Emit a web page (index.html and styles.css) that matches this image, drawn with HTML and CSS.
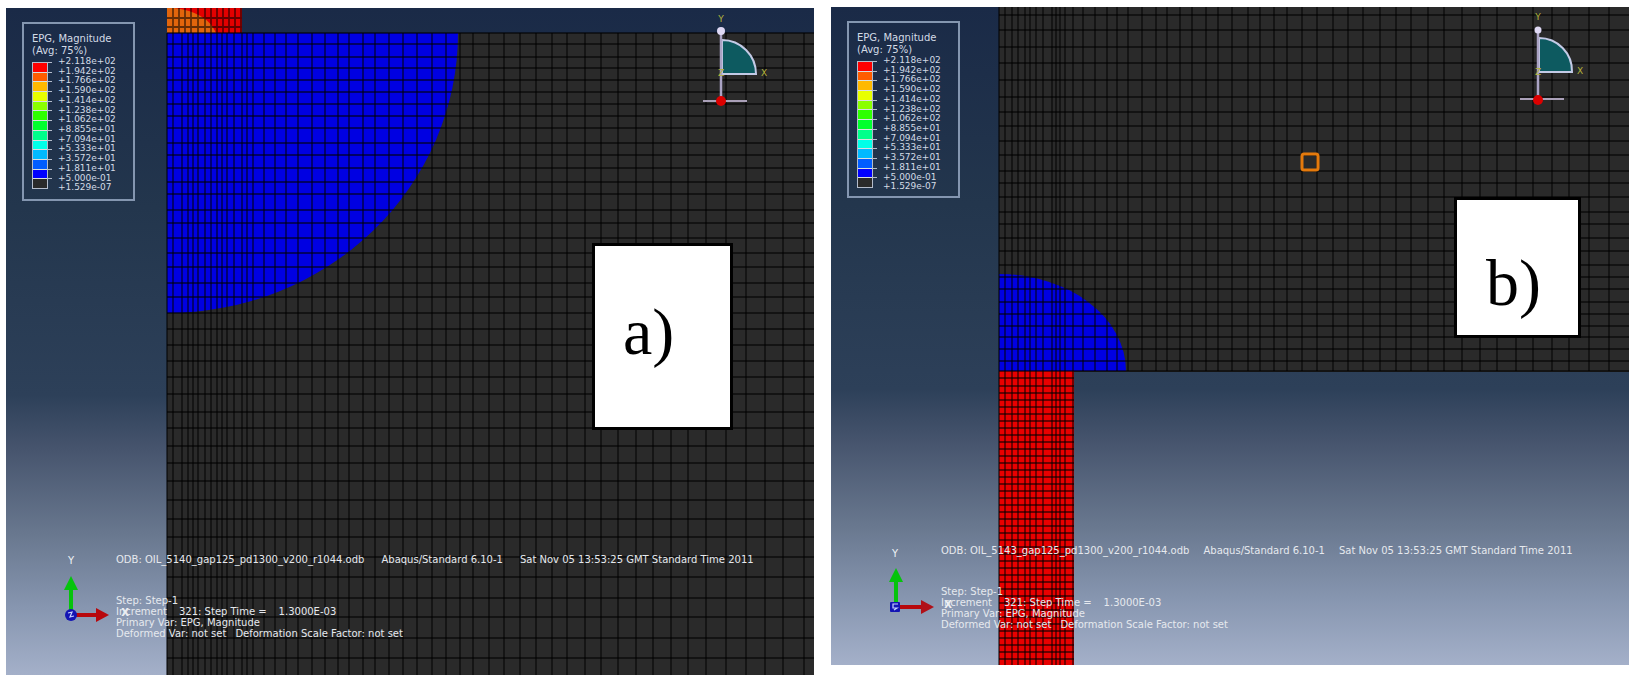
FILE: index.html
```html
<!DOCTYPE html>
<html lang="en">
<head>
<meta charset="utf-8">
<title>EPG magnitude contours</title>
<link rel="stylesheet" href="styles.css">
</head>
<body>
<main class="figure">
  <section class="panel panel-a">
    <svg class="scene" viewBox="6 8 808 667" role="img" aria-label="Contour plot a">
      <defs>
        <linearGradient id="sky" x1="0" y1="0" x2="0" y2="1">
          <stop offset="0" stop-color="#1a2a47"/>
          <stop offset=".3" stop-color="#23364d"/>
          <stop offset=".58" stop-color="#2d4059"/>
          <stop offset=".66" stop-color="#46546d"/>
          <stop offset=".79" stop-color="#69788f"/>
          <stop offset=".9" stop-color="#8796b0"/>
          <stop offset="1" stop-color="#a4b0c9"/>
        </linearGradient>
      </defs>
      <rect x="6" y="8" width="808" height="667" fill="url(#sky)"/>
      <rect x="167" y="33" width="647" height="642" fill="#2a2a2a"/>
      <path d="M167 33H458A291 280 0 0 1 167 313Z" fill="#0000e2"/>
      <rect x="167" y="8" width="75" height="25" fill="#e30000"/>
      <path d="M167 8H174Q207 12 216 33H167Z" fill="#e2650c"/>
      <path class="mesh" d="M173 8V33M179 8V33M185 8V33M191 8V33M198 8V33M205 8V33M211 8V33M217 8V33M223 8V33M229 8V33M235 8V33M241 8V33M167 18H242M167 27H242"/>
      <path class="mesh" d="M167 33V675M173 33V675M182 33V675M188 33V675M193 33V675M198 33V675M205 33V675M211 33V675M217 33V675M222 33V675M227 33V675M234 33V675M242 33V675M247 33V675M253 33V675M264 33V675M275 33V675M286 33V675M298 33V675M312 33V675M325 33V675M338 33V675M349 33V675M363 33V675M375 33V675M389 33V675M403 33V675M417 33V675M432 33V675M446 33V675M460 33V675M473 33V675M489 33V675M504 33V675M520 33V675M536 33V675M552 33V675M567 33V675M585 33V675M601 33V675M618 33V675M636 33V675M653 33V675M671 33V675M688 33V675M706 33V675M726 33V675M746 33V675M765 33V675M783 33V675M804 33V675"/>
      <path class="mesh" d="M167 33H814M167 44H814M167 57H814M167 68H814M167 80H814M167 92H814M167 104H814M167 116H814M167 128H814M167 143H814M167 155H814M167 168H814M167 182H814M167 194H814M167 210H814M167 223H814M167 238H814M167 253H814M167 267H814M167 283H814M167 297H814M167 313H814M167 329H814M167 345H814M167 361H814M167 377H814M167 394H814M167 412H814M167 428H814M167 446H814M167 463H814M167 481H814M167 500H814M167 519H814M167 537H814M167 557H814M167 577H814M167 598H814M167 617H814M167 638H814M167 658H814"/>
      <g class="compass">
        <path d="M722 40A34 34 0 0 1 756 74H722Z" class="sector"/>
        <path d="M721 31V98" class="stem"/>
        <path d="M703 101H747" class="base"/>
        <circle cx="721" cy="31" r="4" fill="#ded8f4"/>
        <circle cx="721" cy="101" r="5" fill="#dc0000"/>
        <text x="721" y="22">Y</text><text x="764" y="76">X</text><text x="721" y="76">Z</text>
      </g>
      <g class="triad">
        <path d="M71 610V588" class="up"/><path d="M64 590L71 576L78 590Z" fill="#05c40c"/>
        <path d="M76 615H98" class="right"/><path d="M96 608L109 615L96 622Z" fill="#b8080c"/>
        <circle cx="71" cy="615" r="6" fill="#1414b4"/>
        <path d="M68 613L72 612L70 617L74 616" class="zmark"/>
        <text x="71" y="564">Y</text><text x="125" y="616" class="bold">X</text>
      </g>
    </svg>
    <div class="legend">
      <p class="legend-title">EPG, Magnitude<br>(Avg: 75%)</p>
      <div class="scale">
        <div class="bar"><i class="c1"></i><i class="c2"></i><i class="c3"></i><i class="c4"></i><i class="c5"></i><i class="c6"></i><i class="c7"></i><i class="c8"></i><i class="c9"></i><i class="c10"></i><i class="c11"></i><i class="c12"></i><i class="c13"></i></div>
        <ul class="values"><li>+2.118e+02</li><li>+1.942e+02</li><li>+1.766e+02</li><li>+1.590e+02</li><li>+1.414e+02</li><li>+1.238e+02</li><li>+1.062e+02</li><li>+8.855e+01</li><li>+7.094e+01</li><li>+5.333e+01</li><li>+3.572e+01</li><li>+1.811e+01</li><li>+5.000e-01</li><li>+1.529e-07</li></ul>
      </div>
    </div>
    <div class="tag">a)</div>
    <div class="status">
      <p class="source"><span>ODB: OIL_5140_gap125_pd1300_v200_r1044.odb</span><span>Abaqus/Standard 6.10-1</span><span>Sat Nov 05 13:53:25 GMT Standard Time 2011</span></p>
      <p>Step: Step-1</p>
      <p class="increment"><span>Increment</span><span>321: Step Time =</span><span>1.3000E-03</span></p>
      <p>Primary Var: EPG, Magnitude</p>
      <p class="deformed"><span>Deformed Var: not set</span><span>Deformation Scale Factor: not set</span></p>
    </div>
  </section>

  <section class="panel panel-b">
    <svg class="scene" viewBox="831 7 798 658" role="img" aria-label="Contour plot b">
      <rect x="831" y="7" width="798" height="658" fill="url(#sky)"/>
      <rect x="999" y="7" width="630" height="365" fill="#2a2a2a"/>
      <path d="M999 371V274A127 97 0 0 1 1126 371Z" fill="#0000e2"/>
      <rect x="999" y="371" width="75" height="294" fill="#e80000"/>
      <path class="mesh" d="M999 7V665M1005 7V665M1012 7V665M1018 7V665M1025 7V665M1030 7V665M1036 7V665M1043 7V665M1052 7V665M1056 7V665M1060 7V665M1065 7V665M1073 7V665M1083 7V371M1095 7V371M1107 7V371M1117 7V371M1128 7V371M1142 7V371M1156 7V371M1167 7V371M1180 7V371M1192 7V371M1206 7V371M1218 7V371M1232 7V371M1248 7V371M1260 7V371M1274 7V371M1287 7V371M1302 7V371M1317 7V371M1333 7V371M1348 7V371M1363 7V371M1380 7V371M1396 7V371M1411 7V371M1428 7V371M1444 7V371M1462 7V371M1480 7V371M1497 7V371M1516 7V371M1533 7V371M1552 7V371M1569 7V371M1589 7V371M1609 7V371"/>
      <path class="mesh" d="M999 15H1629M999 30H1629M999 47H1629M999 63H1629M999 80H1629M999 97H1629M999 112H1629M999 126H1629M999 141H1629M999 155H1629M999 171H1629M999 183H1629M999 197H1629M999 212H1629M999 224H1629M999 238H1629M999 251H1629M999 265H1629M999 277H1629M999 289H1629M999 302H1629M999 314H1629M999 326H1629M999 337H1629M999 349H1629M999 361H1629M999 371H1629"/>
      <path class="mesh" d="M999 378H1074M999 386H1074M999 393H1074M999 400H1074M999 407H1074M999 414H1074M999 421H1074M999 428H1074M999 435H1074M999 442H1074M999 449H1074M999 456H1074M999 463H1074M999 470H1074M999 477H1074M999 484H1074M999 491H1074M999 498H1074M999 505H1074M999 512H1074M999 519H1074M999 526H1074M999 533H1074M999 540H1074M999 547H1074M999 554H1074M999 561H1074M999 568H1074M999 575H1074M999 582H1074M999 589H1074M999 596H1074M999 603H1074M999 610H1074M999 617H1074M999 624H1074M999 631H1074M999 638H1074M999 645H1074M999 652H1074M999 659H1074"/>
      <rect x="1302" y="154" width="16" height="16" rx="2" class="marker"/>
      <g class="compass">
        <path d="M1539 38A33 33 0 0 1 1572 72H1539Z" class="sector"/>
        <path d="M1538 30V96" class="stem"/>
        <path d="M1520 99H1564" class="base"/>
        <circle cx="1538" cy="30" r="3.5" fill="#ded8f4"/>
        <circle cx="1538" cy="100" r="5" fill="#dc0000"/>
        <text x="1538" y="20">Y</text><text x="1580" y="74">X</text><text x="1538" y="75">Z</text>
      </g>
      <g class="triad">
        <path d="M896 602V580" class="up"/><path d="M889 582L896 568L903 582Z" fill="#05c40c"/>
        <path d="M900 607H922" class="right"/><path d="M921 600L934 607L921 614Z" fill="#b01018"/>
        <rect x="890" y="602" width="10" height="10" rx="1" fill="#1414b4"/>
        <path d="M898 604H893V608H897L894 610" class="zmark"/>
        <text x="895" y="557">Y</text><text x="948" y="608" class="bold">X</text>
      </g>
    </svg>
    <div class="legend">
      <p class="legend-title">EPG, Magnitude<br>(Avg: 75%)</p>
      <div class="scale">
        <div class="bar"><i class="c1"></i><i class="c2"></i><i class="c3"></i><i class="c4"></i><i class="c5"></i><i class="c6"></i><i class="c7"></i><i class="c8"></i><i class="c9"></i><i class="c10"></i><i class="c11"></i><i class="c12"></i><i class="c13"></i></div>
        <ul class="values"><li>+2.118e+02</li><li>+1.942e+02</li><li>+1.766e+02</li><li>+1.590e+02</li><li>+1.414e+02</li><li>+1.238e+02</li><li>+1.062e+02</li><li>+8.855e+01</li><li>+7.094e+01</li><li>+5.333e+01</li><li>+3.572e+01</li><li>+1.811e+01</li><li>+5.000e-01</li><li>+1.529e-07</li></ul>
      </div>
    </div>
    <div class="tag">b)</div>
    <div class="status">
      <p class="source"><span>ODB: OIL_5143_gap125_pd1300_v200_r1044.odb</span><span>Abaqus/Standard 6.10-1</span><span>Sat Nov 05 13:53:25 GMT Standard Time 2011</span></p>
      <p>Step: Step-1</p>
      <p class="increment"><span>Increment</span><span>321: Step Time =</span><span>1.3000E-03</span></p>
      <p>Primary Var: EPG, Magnitude</p>
      <p class="deformed"><span>Deformed Var: not set</span><span>Deformation Scale Factor: not set</span></p>
    </div>
  </section>
</main>
</body>
</html>
```

FILE: styles.css
```css
* { box-sizing: border-box; }
body { margin: 0; background: #fff; font-family: "DejaVu Sans", Verdana, sans-serif; }
p, ul { margin: 0; padding: 0; list-style: none; }

.figure { display: flex; align-items: flex-start; gap: 17px; padding: 7px 13px 4px 6px; }
.panel { position: relative; min-width: 0; }
.panel-a { flex: 808 1 0; margin-top: 1px; }
.panel-b { flex: 798 1 0; }
.scene { display: block; width: 100%; height: auto; }

.mesh { fill: none; stroke: #000; stroke-opacity: .55; stroke-width: 1.8; }
.marker { fill: none; stroke: #e57a0c; stroke-width: 3; }

.sector { fill: #0d5a60; stroke: #c3cae6; stroke-width: 2; }
.stem { stroke: #aaa3c4; stroke-width: 2.5; }
.base { stroke: #aaa0b8; stroke-width: 2; }
.compass text { fill: #b4b43c; font-size: 9px; text-anchor: middle; }

.triad text { fill: #eef1f6; font-size: 10px; text-anchor: middle; }
.triad .bold { font-weight: bold; }
.up { stroke: #05c40c; stroke-width: 4; }
.right { stroke: #b8080c; stroke-width: 4; }
.zmark { fill: none; stroke: #c8d0ff; stroke-width: 1.2; }

.legend {
  position: absolute;
  top: 14px;
  left: 16px;
  width: 113px;
  padding: 9px 0 5px 8px;
  border: 2px solid #8496b0;
  color: #d3dbe6;
}
.panel-b .legend { padding-bottom: 3px; }
.legend-title { font-size: 10px; line-height: 12px; }
.scale { display: flex; align-items: flex-start; gap: 10px; }
.bar {
  display: flex;
  flex-direction: column;
  width: 16px;
  height: 127px;
  margin: 5px 0;
  border: 1px solid #b4bccb;
}
.bar i { position: relative; flex: 1; border-top: 1px solid #d8dee0; }
.bar i:first-child { border-top: 0; }
.bar i::after {
  content: "";
  position: absolute;
  top: -1px;
  left: 100%;
  width: 5px;
  height: 1px;
  background: #b4bccb;
}
.c1 { background: #ff0000; }
.c2 { background: #ff5d00; }
.c3 { background: #ffb900; }
.c4 { background: #e8ff00; }
.c5 { background: #8bff00; }
.c6 { background: #2eff00; }
.c7 { background: #00ff2e; }
.c8 { background: #00ff8b; }
.c9 { background: #00ffe8; }
.c10 { background: #00b9ff; }
.c11 { background: #005dff; }
.c12 { background: #0000ff; }
.c13 { background: #2a2a2a; }
.values { display: grid; grid-auto-rows: 1fr; height: 136px; font-size: 9px; line-height: 9px; }

.tag {
  position: absolute;
  border: 3px solid #000;
  background: #fff;
  color: #000;
  font: 66px/72px "Liberation Serif", "Times New Roman", serif;
}
.panel-a .tag { top: 235px; right: 81px; width: 141px; height: 187px; padding: 50px 0 0 28px; }
.panel-b .tag { top: 190px; right: 48px; width: 127px; height: 141px; padding: 47px 0 0 29px; }

.status {
  position: absolute;
  left: 110px;
  color: #e6e9ee;
  font-size: 10px;
  line-height: 11px;
  white-space: nowrap;
}
.panel-a .status { bottom: 36px; }
.panel-b .status { bottom: 35px; }
.source { display: flex; gap: 14px; margin-bottom: 30px; }
.panel-a .source { gap: 17px; }
.increment { display: flex; gap: 12px; }
.deformed { display: flex; gap: 9px; }
```
